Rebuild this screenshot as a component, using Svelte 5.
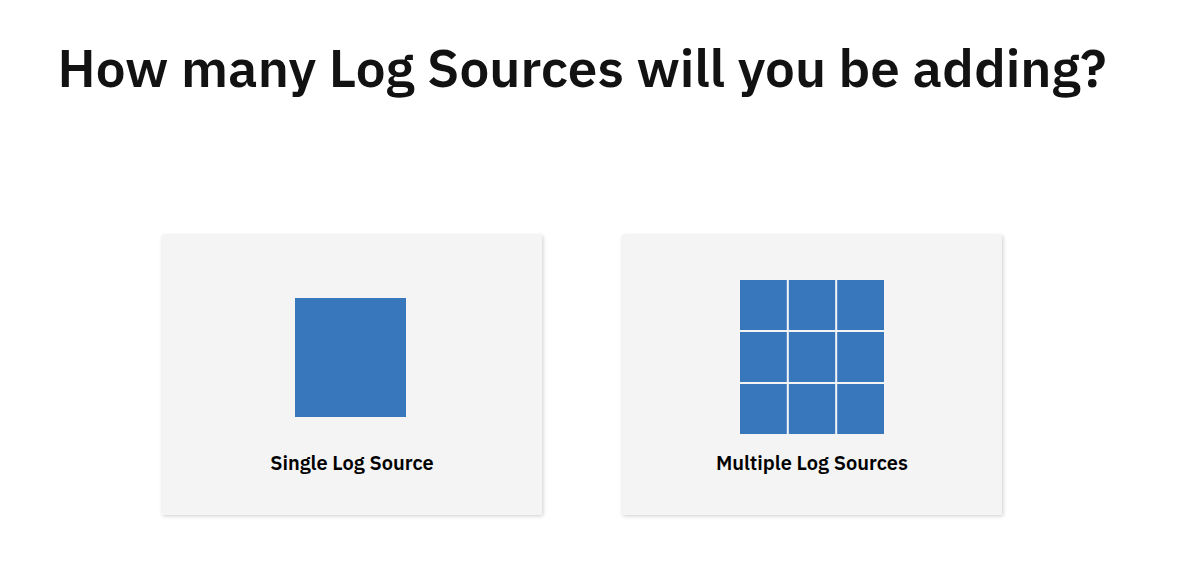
<script>
  let selected = $state(null);
</script>

<main>
  <h1>How many Log Sources will you be adding?</h1>
  <div class="choices">
    <button class="card" aria-pressed={selected === 'single'} onclick={() => (selected = 'single')}>
      <span class="art">
        <svg width="114" height="119" viewBox="0 0 114 119" aria-hidden="true">
          <rect width="111" height="119" />
        </svg>
      </span>
      <span class="label">Single Log Source</span>
    </button>
    <button class="card" aria-pressed={selected === 'multiple'} onclick={() => (selected = 'multiple')}>
      <span class="art">
        <svg width="144" height="154" viewBox="0 0 144 154" aria-hidden="true">
          {#each [0, 52, 104] as y}
            <rect x="0" {y} width="46.8" height="50" />
            <rect x="48.8" {y} width="46.4" height="50" />
            <rect x="97.2" {y} width="46.8" height="50" />
          {/each}
        </svg>
      </span>
      <span class="label">Multiple Log Sources</span>
    </button>
  </div>
</main>

<style>
  :global(body) {
    margin: 0;
    background: #fff;
  }
  main {
    display: flex;
    flex-direction: column;
    align-items: center;
    padding: 32px 25px 52px 0;
    font-family: "IBM Plex Sans", "Noto Sans", sans-serif;
  }
  h1 {
    margin: 0;
    color: #121212;
    font-size: 53px;
    font-weight: 600;
    line-height: 72px;
    text-align: center;
  }
  .choices {
    display: flex;
    flex-wrap: wrap;
    justify-content: center;
    gap: 80px;
    margin-top: 131px;
  }
  .card {
    display: flex;
    flex-direction: column;
    align-items: center;
    width: 380px;
    padding: 43px 16px 38px;
    border: 0;
    background: #f4f4f4;
    box-shadow: 1px 1px 4px rgba(0, 0, 0, 0.2);
    color: #000;
    font: inherit;
    cursor: pointer;
  }
  .art {
    display: flex;
    align-items: center;
    height: 158px;
  }
  .art svg {
    display: block;
    fill: #3877bb;
  }
  .label {
    margin-top: 13px;
    font-size: 20px;
    font-weight: 600;
    line-height: 28px;
  }
</style>
